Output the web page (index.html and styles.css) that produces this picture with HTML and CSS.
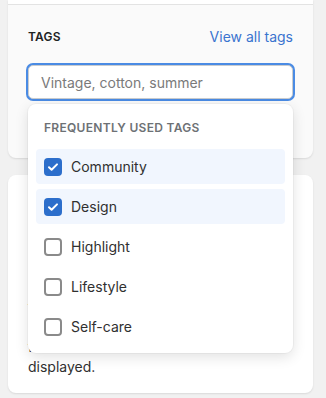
FILE: index.html
```html
<!DOCTYPE html>
<html lang="en">
<head>
<meta charset="utf-8">
<link rel="stylesheet" href="styles.css">
</head>
<body>
<div class="page">
  <section class="card card-tags">
    <div class="card-top"></div>
    <div class="card-body">
      <div class="tags-header">
        <span class="tags-title">TAGS</span>
        <a class="tags-link" href="#">View all tags</a>
      </div>
      <div class="field">
        <input class="tags-input" type="text" placeholder="Vintage, cotton, summer">
        <div class="dropdown">
          <div class="dropdown-title">FREQUENTLY USED TAGS</div>
          <ul class="options">
            <li class="option checked"><span class="box"><svg viewBox="0 0 18 18" width="18" height="18"><path d="M5 9.3l2.6 2.5L13 6.4" fill="none" stroke="#fff" stroke-width="2" stroke-linecap="round" stroke-linejoin="round"/></svg></span><span class="label">Community</span></li>
            <li class="option checked"><span class="box"><svg viewBox="0 0 18 18" width="18" height="18"><path d="M5 9.3l2.6 2.5L13 6.4" fill="none" stroke="#fff" stroke-width="2" stroke-linecap="round" stroke-linejoin="round"/></svg></span><span class="label">Design</span></li>
            <li class="option"><span class="box"></span><span class="label">Highlight</span></li>
            <li class="option"><span class="box"></span><span class="label">Lifestyle</span></li>
            <li class="option"><span class="box"></span><span class="label">Self-care</span></li>
          </ul>
        </div>
      </div>
    </div>
  </section>
  <section class="card card-info">
    <p class="info-text">Tags help customers find products. Add tags to organize items in your store and choose how they are grouped, sorted, filtered and<br>displayed.</p>
  </section>
</div>
</body>
</html>
```
FILE: styles.css
```css
* { box-sizing: border-box; }
html, body { margin: 0; padding: 0; }
body {
  background: #f1f1f1;
  font-family: Inter, "Noto Sans", sans-serif;
  color: #303030;
  width: 326px;
  height: 398px;
  overflow: hidden;
}
.page {
  padding: 0 13px 0 8px;
  display: flex;
  flex-direction: column;
  gap: 17px;
}
.card {
  border-radius: 0 0 8px 8px;
  box-shadow: 0 1px 2px rgba(0,0,0,0.10);
}
.card-tags {
  background: #fafafa;
  height: 158px;
}
.card-top {
  height: 5px;
  background: #ffffff;
  border-bottom: 1px solid #e3e3e3;
}
.card-body {
  padding: 21px 20px 0 20px;
}
.tags-header {
  display: flex;
  justify-content: space-between;
  align-items: center;
  height: 20px;
}
.tags-title {
  font-size: 12px;
  font-weight: 600;
  color: #202223;
  letter-spacing: 0.2px;
}
.tags-link {
  font-size: 14px;
  color: #3a74cf;
  text-decoration: none;
}
.field {
  position: relative;
  margin-top: 19px;
}
.tags-input {
  display: block;
  width: 100%;
  height: 34px;
  border: 1px solid #c9cccf;
  border-radius: 5px;
  box-shadow: 0 0 0 2px #4a8be4;
  padding: 0 12px;
  font-family: inherit;
  font-size: 14px;
  color: #303030;
  background: #ffffff;
  outline: none;
}
.tags-input::placeholder { color: #7a7a7a; }
.dropdown {
  position: absolute;
  top: 39px;
  left: 0;
  right: 0;
  background: #ffffff;
  border-radius: 8px;
  box-shadow: 0 4px 14px rgba(0,0,0,0.12), 0 0 0 1px rgba(0,0,0,0.03);
  padding: 8px 8px 9px 8px;
  z-index: 5;
}
.dropdown-title {
  padding: 8px;
  font-size: 12px;
  line-height: 16px;
  font-weight: 600;
  color: #6d7175;
  letter-spacing: 0.3px;
}
.options {
  list-style: none;
  margin: 5px 0 0 0;
  padding: 0;
  display: flex;
  flex-direction: column;
  gap: 5px;
}
.option {
  display: flex;
  align-items: center;
  gap: 9px;
  height: 35px;
  padding: 0 8px;
  border-radius: 4px;
  font-size: 14px;
  color: #303030;
}
.option.checked { background: #f1f6fe; }
.box {
  width: 18px;
  height: 18px;
  border: 2px solid #8a8a8a;
  border-radius: 4px;
  flex: none;
  display: flex;
  align-items: center;
  justify-content: center;
  background: #ffffff;
}
.option.checked .box {
  background: #2c6ecb;
  border: none;
}
.card-info {
  background: #ffffff;
  border-radius: 8px;
  height: 218px;
  padding: 20px 20px 16px 20px;
  display: flex;
  align-items: flex-end;
}
.info-text {
  margin: 0;
  font-size: 14px;
  line-height: 20px;
  color: #303030;
}
```
